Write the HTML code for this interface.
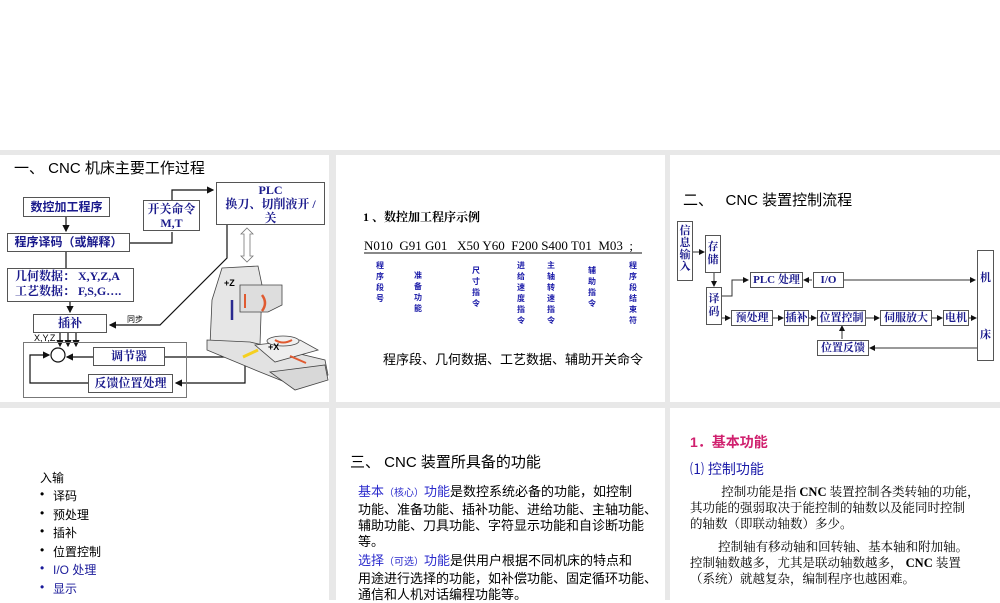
<!DOCTYPE html>
<html><head><meta charset="utf-8"><style>
body{margin:0;width:1000px;height:600px;background:#fff;position:relative;overflow:hidden;font-family:"Liberation Sans","Noto Sans CJK SC",sans-serif;}
.g{position:absolute;left:0;top:150px;width:1000px;height:450px;background:#e8e8e8}
.p{position:absolute;background:#fff}
.t{position:absolute;white-space:nowrap}
.b{position:absolute;border:1px solid #555;background:#fff;color:#1a1a8c;font-weight:bold;font-size:12px;text-align:center;box-sizing:border-box;font-family:"Liberation Serif","Noto Serif CJK SC",serif}
.v{position:absolute;color:#1a1aa8;font-size:8px;font-weight:bold;line-height:11px;width:12px;text-align:center}
.li{position:absolute;left:40px;font-size:12px}
.li:before{content:"•";position:absolute;left:0}
.li span{position:absolute;left:13px;white-space:nowrap}
.par{position:absolute;white-space:nowrap;font-size:13px;line-height:16px}
</style></head><body>
<div class="g"></div>
<div class="p" style="left:0;top:155px;width:329px;height:247px"></div>
<div class="p" style="left:336px;top:155px;width:329px;height:247px"></div>
<div class="p" style="left:670px;top:155px;width:330px;height:247px"></div>
<div class="p" style="left:0;top:408px;width:329px;height:192px"></div>
<div class="p" style="left:336px;top:408px;width:329px;height:192px"></div>
<div class="p" style="left:670px;top:408px;width:330px;height:192px"></div>

<svg style="position:absolute;left:0;top:0" width="1000" height="600" stroke="#111" fill="none" stroke-width="1.2">
<defs><marker id="a" markerWidth="6" markerHeight="6" refX="5" refY="3" orient="auto"><path d="M0,0L6,3L0,6z" fill="#111" stroke="none"/></marker></defs>
<path d="M66,217V231" marker-end="url(#a)"/>
<path d="M130,243H172V232" />
<path d="M172,200V190H213" marker-end="url(#a)"/>
<path d="M66,252V268"/>
<path d="M70,302V312" marker-end="url(#a)"/>
<path d="M227,224V258L160,325H110" marker-end="url(#a)"/>
<path d="M60,332V346" marker-end="url(#a)"/><path d="M68,332V346" marker-end="url(#a)"/><path d="M76,332V346" marker-end="url(#a)"/>
<circle cx="58" cy="355" r="7" fill="#fff"/>
<path d="M165,357H248" marker-end="url(#a)"/><path d="M93,357H67" marker-end="url(#a)"/>
<path d="M245,357V383H176" marker-end="url(#a)"/>
<path d="M88,383H30V355H49" marker-end="url(#a)"/>
<path d="M247,228L253,234H250V256H253L247,262L241,256H244V234H241Z" fill="#fff" stroke="#777" stroke-width="0.8"/>
<g stroke="#444" stroke-width="0.8">
<path d="M222,268L258,266L262,285L260,345L210,345L212,300Z" fill="#e6e6e6"/>
<path d="M240,285H282V305L268,312H240Z" fill="#ddd"/>
<path d="M207,340L250,342L325,360L328,375L300,388L260,372L207,350Z" fill="#e2e2e2"/>
<path d="M255,345L300,340L318,350L275,362Z" fill="#eee"/>
<ellipse cx="283" cy="341" rx="16" ry="5" fill="#f0f0f0"/>
<path d="M270,372L325,365L328,380L295,390Z" fill="#d8d8d8"/>
</g>
<path d="M245,294V308" stroke="#e05a30" stroke-width="2"/><path d="M232,300V320" stroke="#2a2a90" stroke-width="2.5"/>
<path d="M262,295Q268,303 262,311" stroke="#e05a30" stroke-width="2.5"/>
<path d="M243,357L258,350" stroke="#f5d020" stroke-width="3"/>
<path d="M290,356L306,363" stroke="#e05a30" stroke-width="2"/>
<path d="M275,340Q283,345 292,340" stroke="#e05a30" stroke-width="2"/>
<path d="M364,253H642" stroke-width="1"/>
<g stroke="#333" stroke-width="1">
<path d="M693,252H704" marker-end="url(#a)"/>
<path d="M714,273V286" marker-end="url(#a)"/>
<path d="M722,296H732V280H748" marker-end="url(#a)"/>
<path d="M812,280H804" marker-end="url(#a)"/>
<path d="M844,280H975" marker-end="url(#a)"/>
<path d="M722,318H730" marker-end="url(#a)"/>
<path d="M773,318H783" marker-end="url(#a)"/>
<path d="M809,318H816" marker-end="url(#a)"/>
<path d="M866,318H879" marker-end="url(#a)"/>
<path d="M932,318H942" marker-end="url(#a)"/>
<path d="M969,318H976" marker-end="url(#a)"/>
<path d="M842,339V326" marker-end="url(#a)"/>
<path d="M977,348H870" marker-end="url(#a)"/>
</g>
</svg>

<div class="t" style="left:14px;top:157px;font-size:15px">一、 CNC 机床主要工作过程</div>
<div class="b" style="left:23px;top:197px;width:87px;height:20px;line-height:18px;font-family:'Liberation Sans','Noto Sans CJK SC',sans-serif">数控加工程序</div>
<div class="b" style="left:7px;top:233px;width:123px;height:19px;line-height:17px;font-family:'Liberation Sans','Noto Sans CJK SC',sans-serif">程序译码（或解释）</div>
<div class="b" style="left:143px;top:200px;width:57px;height:31px;line-height:14px;padding-top:1px">开关命令<br>M,T</div>
<div class="b" style="left:216px;top:182px;width:109px;height:43px;line-height:14px">PLC<br>换刀、切削液开 /<br>关</div>
<div class="b" style="left:7px;top:268px;width:127px;height:34px;line-height:15px;text-align:left;padding-left:7px">几何数据： X,Y,Z,A<br>工艺数据： F,S,G….</div>
<div class="b" style="left:33px;top:314px;width:74px;height:19px;line-height:17px">插补</div>
<div style="position:absolute;left:23px;top:342px;width:164px;height:56px;border:1px solid #777;box-sizing:border-box"></div>
<div class="b" style="left:93px;top:347px;width:72px;height:19px;line-height:17px">调节器</div>
<div class="b" style="left:88px;top:374px;width:85px;height:19px;line-height:17px">反馈位置处理</div>
<div class="t" style="left:34px;top:333px;font-size:9px">X,Y,Z</div>
<div class="t" style="left:127px;top:314px;font-size:8px">同步</div>
<div class="t" style="left:224px;top:278px;font-size:9px;font-weight:bold">+Z</div>
<div class="t" style="left:268px;top:342px;font-size:9px;font-weight:bold">+X</div>

<div class="t" style="left:363px;top:208px;font-size:12px;font-weight:bold;font-family:'Liberation Serif','Noto Serif CJK SC',serif">1 、数控加工程序示例</div>
<div class="t" style="left:364px;top:238px;font-size:13px;font-family:'Liberation Serif',serif">N010&nbsp; G91 G01&nbsp;&nbsp; X50 Y60&nbsp; F200 S400 T01&nbsp; M03 &nbsp;;&nbsp;</div>
<div class="v" style="left:374px;top:260px">程<br>序<br>段<br>号</div>
<div class="v" style="left:412px;top:270px">准<br>备<br>功<br>能</div>
<div class="v" style="left:470px;top:265px">尺<br>寸<br>指<br>令</div>
<div class="v" style="left:515px;top:260px">进<br>给<br>速<br>度<br>指<br>令</div>
<div class="v" style="left:545px;top:260px">主<br>轴<br>转<br>速<br>指<br>令</div>
<div class="v" style="left:586px;top:265px">辅<br>助<br>指<br>令</div>
<div class="v" style="left:627px;top:260px">程<br>序<br>段<br>结<br>束<br>符</div>
<div class="t" style="left:383px;top:349px;font-size:13px">程序段、几何数据、工艺数据、辅助开关命令</div>

<div class="t" style="left:683px;top:189px;font-size:15px">二、&nbsp;&nbsp; CNC 装置控制流程</div>
<div class="b" style="left:677px;top:221px;width:16px;height:60px;line-height:12px;font-size:11px;padding-top:3px">信息输入</div>
<div class="b" style="left:705px;top:235px;width:16px;height:38px;line-height:13px;font-size:11px;padding-top:5px">存储</div>
<div class="b" style="left:706px;top:287px;width:16px;height:38px;line-height:13px;font-size:11px;padding-top:5px">译码</div>
<div class="b" style="left:750px;top:272px;width:53px;height:16px;line-height:14px;font-size:11px">PLC 处理</div>
<div class="b" style="left:813px;top:272px;width:31px;height:16px;line-height:14px;font-size:11px">I/O</div>
<div class="b" style="left:731px;top:310px;width:42px;height:16px;line-height:14px;font-size:11px">预处理</div>
<div class="b" style="left:784px;top:310px;width:25px;height:16px;line-height:14px;font-size:11px">插补</div>
<div class="b" style="left:817px;top:310px;width:49px;height:16px;line-height:14px;font-size:11px">位置控制</div>
<div class="b" style="left:880px;top:310px;width:52px;height:16px;line-height:14px;font-size:11px">伺服放大</div>
<div class="b" style="left:943px;top:310px;width:26px;height:16px;line-height:14px;font-size:11px">电机</div>
<div class="b" style="left:817px;top:340px;width:52px;height:16px;line-height:14px;font-size:11px">位置反馈</div>
<div class="b" style="left:977px;top:250px;width:17px;height:111px;font-size:11px"><div style="position:absolute;top:18px;width:100%">机</div><div style="position:absolute;top:75px;width:100%">床</div></div>

<div class="t" style="left:40px;top:469px;font-size:12px">入输</div>
<div class="li" style="top:487px"><span>译码</span></div>
<div class="li" style="top:506px"><span>预处理</span></div>
<div class="li" style="top:524px"><span>插补</span></div>
<div class="li" style="top:543px"><span>位置控制</span></div>
<div class="li" style="top:561px;color:#1a1a9a"><span>I/O 处理</span></div>
<div class="li" style="top:580px;color:#1a1a9a"><span>显示</span></div>

<div class="t" style="left:350px;top:451px;font-size:15px">三、 CNC 装置所具备的功能</div>
<div class="par" style="left:358px;top:484px"><span style="color:#2a2acc">基本<span style="font-size:10px">（核心）</span>功能</span>是数控系统必备的功能，如控制<br>功能、准备功能、插补功能、进给功能、主轴功能、<br>辅助功能、刀具功能、字符显示功能和自诊断功能<br>等。</div>
<div class="par" style="left:358px;top:553px"><span style="color:#2a2acc">选择<span style="font-size:10px">（可选）</span>功能</span>是供用户根据不同机床的特点和<br>用途进行选择的功能，如补偿功能、固定循环功能、<br>通信和人机对话编程功能等。</div>

<div class="t" style="left:690px;top:432px;font-size:14px;color:#d0206e;font-weight:bold">1．基本功能</div>
<div class="t" style="left:690px;top:459px;font-size:14px;color:#1a1aa8">⑴ 控制功能</div>
<div class="par" style="left:690px;top:484px;font-size:12.5px;font-family:'Liberation Serif','Noto Serif CJK SC',serif">&nbsp;&nbsp;&nbsp;&nbsp;&nbsp;&nbsp;&nbsp;&nbsp;&nbsp;&nbsp;控制功能是指 <b>CNC</b> 装置控制各类转轴的功能，<br>其功能的强弱取决于能控制的轴数以及能同时控制<br>的轴数（即联动轴数）多少。</div>
<div class="par" style="left:690px;top:539px;font-size:12.5px;font-family:'Liberation Serif','Noto Serif CJK SC',serif">&nbsp;&nbsp;&nbsp;&nbsp;&nbsp;&nbsp;&nbsp;&nbsp;&nbsp;控制轴有移动轴和回转轴、基本轴和附加轴。<br>控制轴数越多，尤其是联动轴数越多， <b>CNC</b> 装置<br>（系统）就越复杂，编制程序也越困难。</div>
</body></html>
